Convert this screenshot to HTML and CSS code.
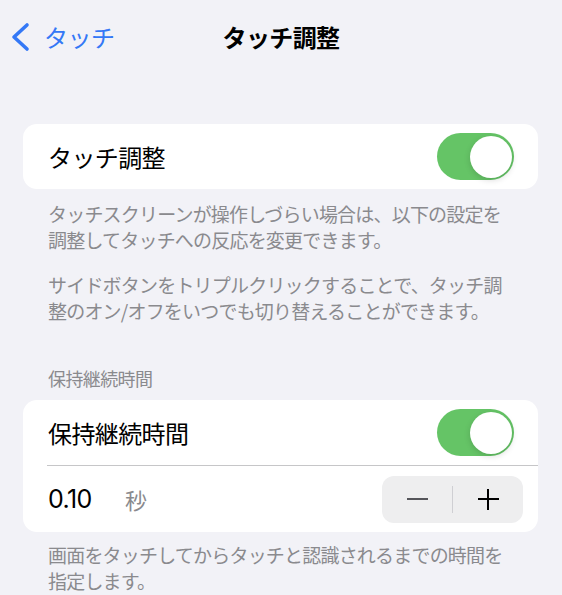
FILE: index.html
```html
<!DOCTYPE html>
<html lang="ja">
<head>
    <meta charset="UTF-8">
    <meta name="viewport" content="width=device-width, initial-scale=1.0">
    <title>タッチ調整</title>
    <link rel="stylesheet" href="styles.css">
</head>
<body>
    <div id="nav">
        <div class="back">
            <svg class="chevron" width="20" height="30" viewBox="0 0 20 30">
                <path d="M16 3 L3 15 L16 27" fill="none" stroke="#3478f6" stroke-width="3.6" stroke-linecap="round" stroke-linejoin="round"/>
            </svg>
            <span>タッチ</span>
        </div>
        <div class="title">タッチ調整</div>
        <div></div>
    </div>

    <div class="group first">
        <div class="row">
            <span class="label">タッチ調整</span>
            <div class="switch on"><div></div></div>
        </div>
    </div>
    <div class="footer">
        <p>タッチスクリーンが操作しづらい場合は、以下の設定を<br>調整してタッチへの反応を変更できます。</p>
        <p>サイドボタンをトリプルクリックすることで、タッチ調<br>整のオン/オフをいつでも切り替えることができます。</p>
    </div>

    <div class="header">保持継続時間</div>
    <div class="group">
        <div class="row">
            <span class="label">保持継続時間</span>
            <div class="switch on"><div></div></div>
        </div>
        <div class="row value">
            <span class="num">0.10</span>
            <span class="unit">秒</span>
            <div class="stepper">
                <div class="minus"></div>
                <div class="bar"></div>
                <div class="plus"></div>
            </div>
        </div>
    </div>
    <div class="footer">
        <p>画面をタッチしてからタッチと認識されるまでの時間を<br>指定します。</p>
    </div>
</body>
</html>
```

FILE: styles.css
```css
*{
    margin: 0;
    padding: 0;
    box-sizing: border-box;
}
body{
    background-color: #f2f2f7;
    font-family: "Noto Sans CJK JP", sans-serif;
    color: #000;
    width: 562px;
    overflow: hidden;
}

#nav{
    height: 76px;
    padding-bottom: 4px;
    display: grid;
    grid-template-columns: 1fr auto 1fr;
    align-items: center;
}
#nav .back{
    display: flex;
    align-items: center;
    padding-left: 11px;
    color: #3478f6;
    font-size: 24px;
    letter-spacing: -0.5px;
}
#nav .back .chevron{
    margin-right: 13px;
    margin-top: 2px;
}
#nav .title{
    font-size: 24px;
    font-weight: bold;
    letter-spacing: -0.6px;
}

.group{
    margin: 0 24px 0 23px;
    background-color: #fff;
    border-radius: 14px;
    overflow: hidden;
}
.group.first{
    margin-top: 48px;
}
.row{
    height: 65px;
    display: flex;
    align-items: center;
    padding: 0 24px 0 25px;
}
.row + .row{
    border-top: 1px solid #c6c6c8;
    margin-left: 24px;
    padding-left: 1px;
    height: 67px;
}
.label{
    flex: 1;
    font-size: 24px;
    letter-spacing: -0.6px;
}

.switch{
    width: 77px;
    height: 47px;
    border-radius: 24px;
    background-color: #65c466;
    padding: 2.5px;
    display: flex;
    justify-content: flex-end;
}
.switch > div{
    width: 42px;
    height: 42px;
    border-radius: 50%;
    background-color: #fff;
    box-shadow: 0 2px 6px rgba(0,0,0,0.15);
}

.value{
    padding-right: 15px;
}
.num{
    font-family: Inter, sans-serif;
    font-size: 25px;
    letter-spacing: -0.6px;
    width: 77px;
}
.unit{
    flex: 1;
    font-size: 22px;
    color: #8a8a8e;
}
.stepper{
    width: 141px;
    height: 47px;
    border-radius: 12px;
    background-color: #eeeeef;
    display: grid;
    grid-template-columns: 1fr 1px 1fr;
    align-items: center;
    justify-items: center;
}
.stepper .minus{
    width: 21px;
    height: 2px;
    background-color: #55555a;
}
.stepper .bar{
    width: 1px;
    height: 27px;
    background-color: #cfcfd3;
}
.stepper .plus{
    width: 21px;
    height: 21px;
    background:
        linear-gradient(#000, #000) center / 21px 2px no-repeat,
        linear-gradient(#000, #000) center / 2px 21px no-repeat;
}

.footer{
    padding: 12px 24px 0 48px;
    color: #8a8a8e;
    font-size: 19px;
    letter-spacing: -0.8px;
    line-height: 26px;
}
.footer p + p{
    margin-top: 19px;
}
.header{
    margin-top: 41px;
    padding-left: 48px;
    color: #8a8a8e;
    font-size: 18px;
    letter-spacing: -0.6px;
    line-height: 26px;
    margin-bottom: 9px;
}
.header + .group + .footer{
    padding-top: 10px;
}
```
